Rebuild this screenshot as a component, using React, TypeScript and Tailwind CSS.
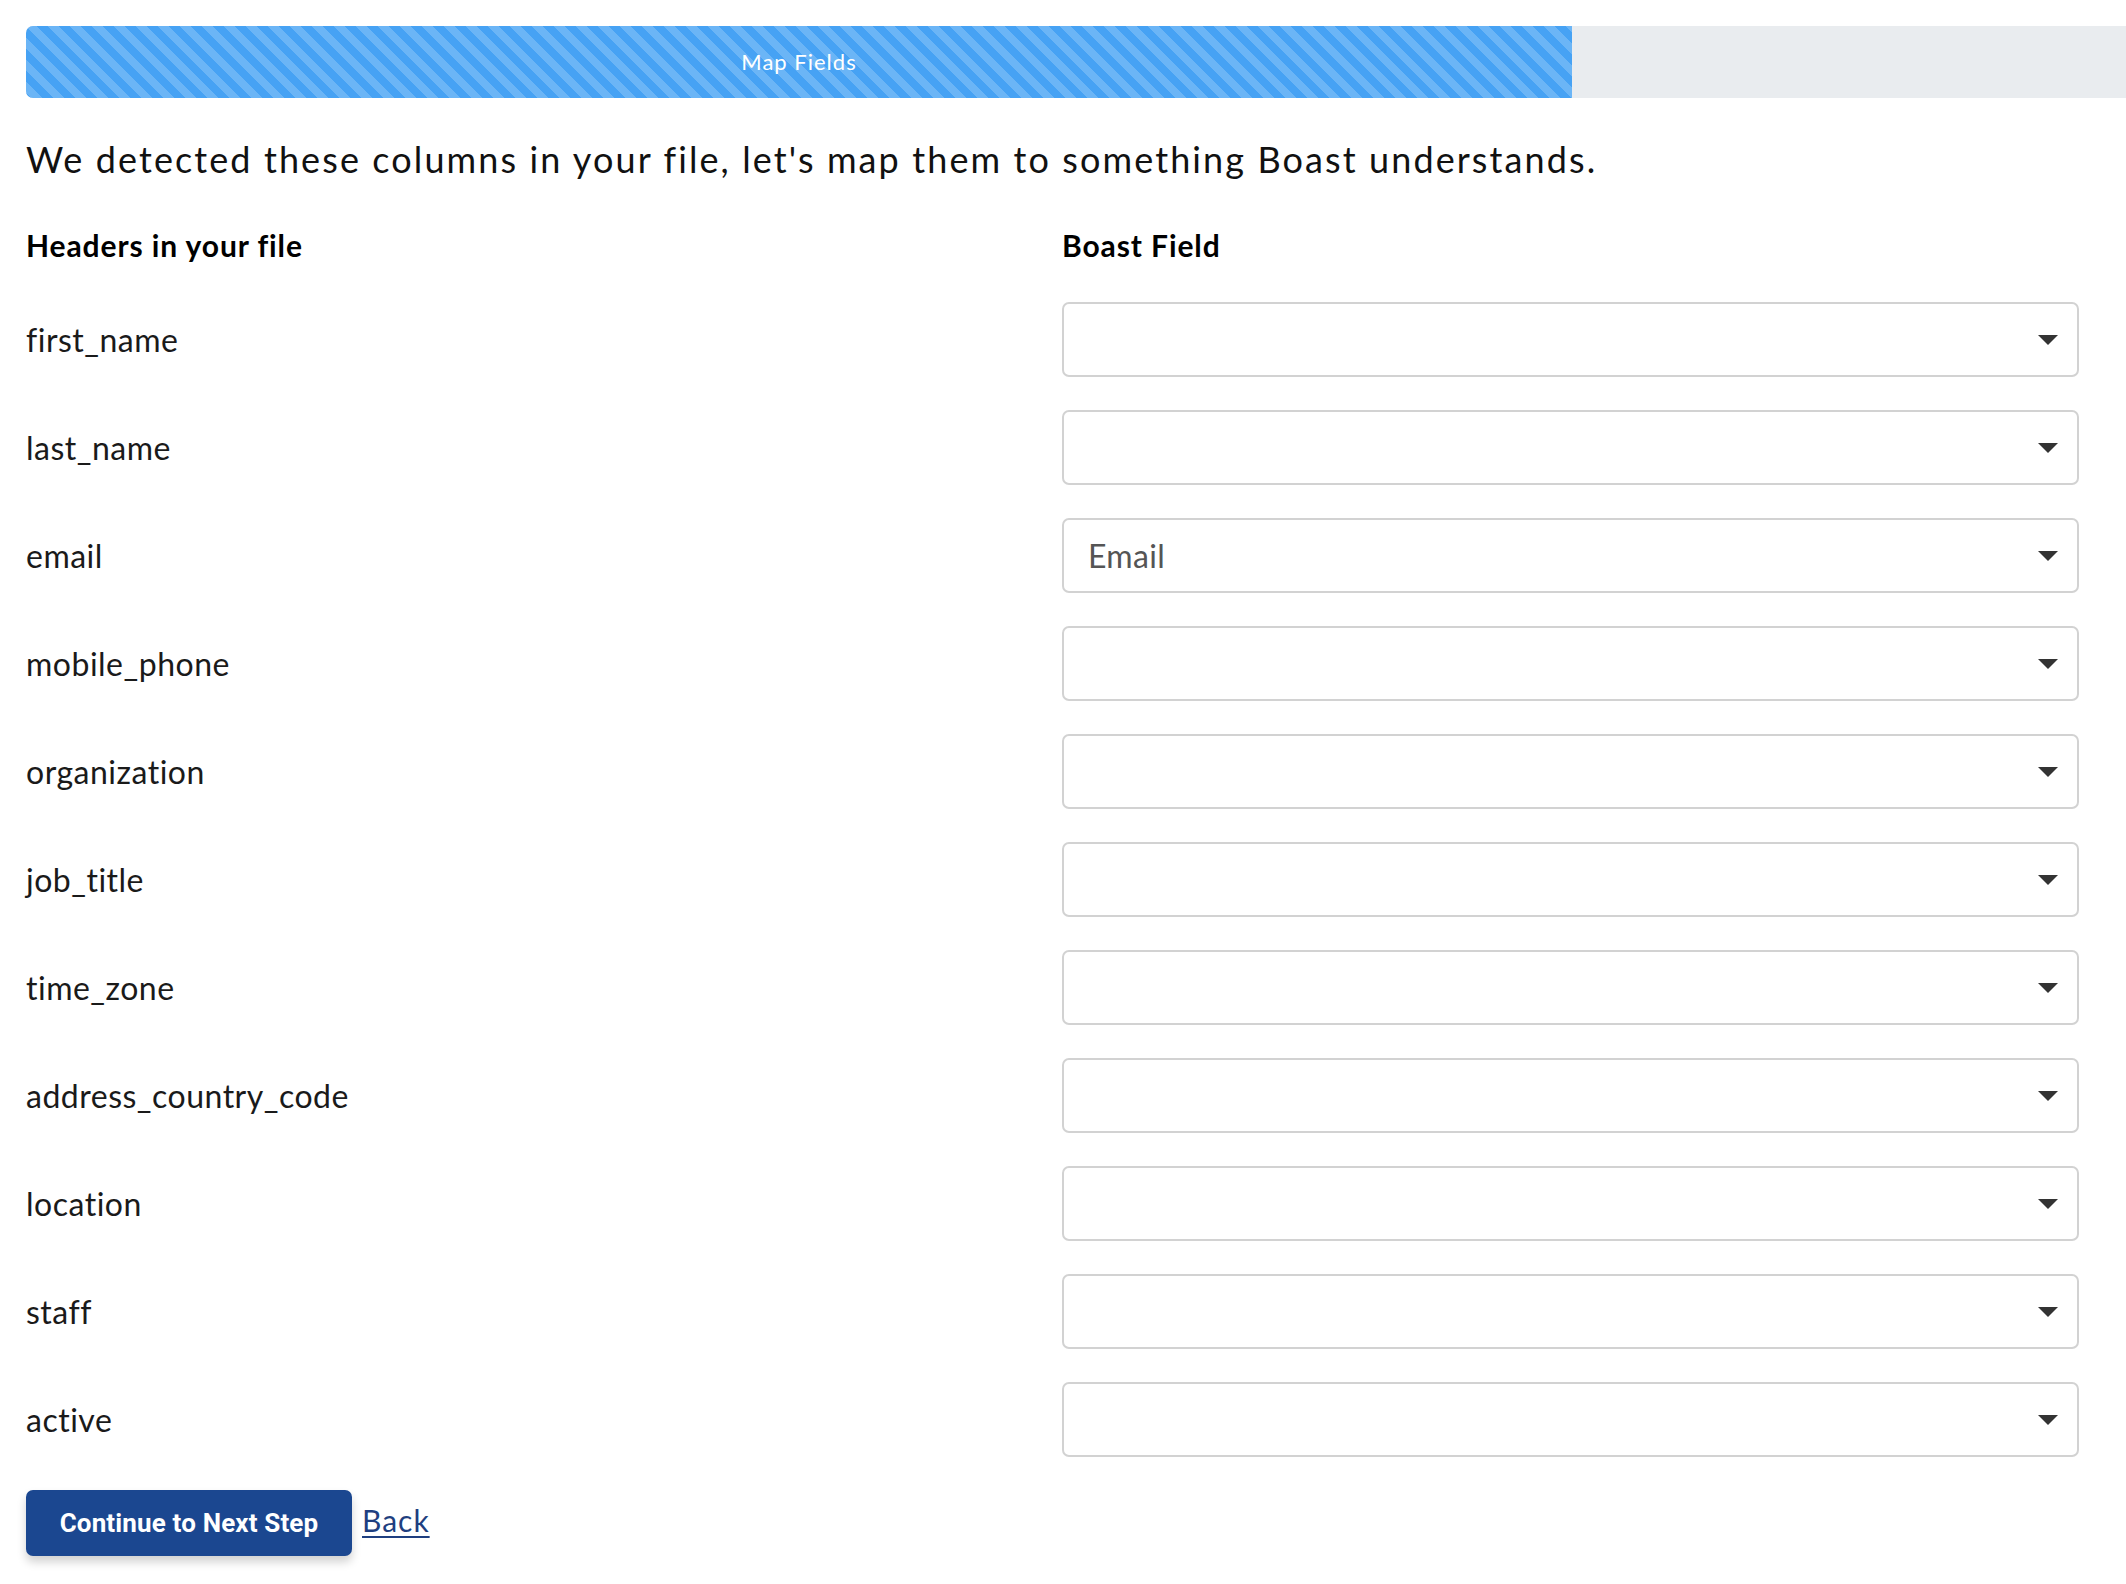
import React from "react";

const rows: { label: string; value: string }[] = [
  { label: "first_name", value: "" },
  { label: "last_name", value: "" },
  { label: "email", value: "Email" },
  { label: "mobile_phone", value: "" },
  { label: "organization", value: "" },
  { label: "job_title", value: "" },
  { label: "time_zone", value: "" },
  { label: "address_country_code", value: "" },
  { label: "location", value: "" },
  { label: "staff", value: "" },
  { label: "active", value: "" },
];

function Caret() {
  return (
    <svg width="20" height="10" viewBox="0 0 20 10" className="shrink-0">
      <path d="M0 0 L20 0 L10 10 Z" fill="#333333" />
    </svg>
  );
}

export default function App() {
  return (
    <div className="min-h-screen bg-white overflow-hidden pl-[26px] pr-[47px] pt-[26px] pb-[28px] font-['Lato','Noto_Sans',sans-serif] text-[#1a1a1a]">
      {/* progress bar */}
      <div className="flex h-[72px] mr-[-47px] bg-[#e9ecef] rounded-l-[7px] overflow-hidden">
        <div className="w-[1546px] h-full flex items-center justify-center bg-[#46a2f4] bg-[linear-gradient(45deg,rgba(255,255,255,0.2)_25%,transparent_25%,transparent_50%,rgba(255,255,255,0.2)_50%,rgba(255,255,255,0.2)_75%,transparent_75%,transparent)] bg-[length:22px_22px]">
          <span className="text-white text-[22px] leading-none tracking-[1px]">Map Fields</span>
        </div>
      </div>

      <h1 className="mt-[40px] text-[36px] leading-[42px] font-normal text-[#111] tracking-[2.1px]">
        We detected these columns in your file, let's map them to something Boast understands.
      </h1>

      <div className="mt-[48px] grid grid-cols-2 gap-x-[19px]">
        <div className="text-[30px] leading-[34px] font-bold text-black tracking-[0.9px]">Headers in your file</div>
        <div className="text-[30px] leading-[34px] font-bold text-black tracking-[0.9px]">Boast Field</div>
      </div>

      <div className="mt-[40px] flex flex-col gap-[33px]">
        {rows.map((r) => (
          <div key={r.label} className="grid grid-cols-2 gap-x-[19px] items-center">
            <div className="text-[32px] leading-none text-[#1a1a1a] tracking-[0.5px]">{r.label}</div>
            <div className="h-[75px] border-2 border-[#d2d2d2] rounded-[7px] bg-white flex items-center justify-between pl-[24px] pr-[19px]">
              <span className="text-[32px] leading-none text-[#555555] tracking-[0.3px]">{r.value}</span>
              <Caret />
            </div>
          </div>
        ))}
      </div>

      <div className="mt-[33px] flex items-center gap-[10px]">
        <button className="h-[66px] w-[326px] rounded-[7px] bg-[#1b4790] text-white font-['Roboto',sans-serif] font-bold text-[26px] tracking-[0.15px] shadow-[0_6px_10px_rgba(0,0,0,0.18)]">
          Continue to Next Step
        </button>
        <a href="#" className="mb-[6px] text-[30px] leading-none text-[#1f3f80] underline underline-offset-[4px] decoration-[2px] tracking-[1px]">
          Back
        </a>
      </div>
    </div>
  );
}
